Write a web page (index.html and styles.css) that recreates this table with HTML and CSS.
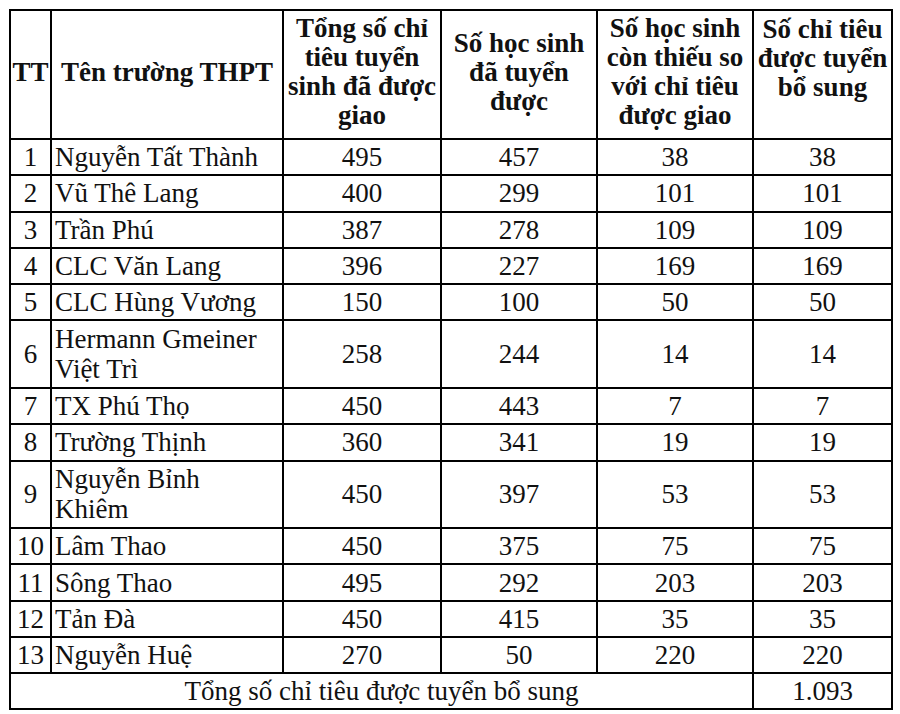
FILE: index.html
```html
<!DOCTYPE html>
<html lang="vi">
<head>
<meta charset="utf-8">
<link rel="stylesheet" href="styles.css">
</head>
<body>
<table class="tbl">
  <colgroup>
    <col class="c-tt"><col class="c-name"><col class="c-n1"><col class="c-n2"><col class="c-n3"><col class="c-n4">
  </colgroup>
  <thead>
    <tr class="head">
      <th>TT</th>
      <th>Tên trường THPT</th>
      <th>Tổng số chỉ<br>tiêu tuyển<br>sinh đã được<br>giao</th>
      <th>Số học sinh<br>đã tuyển<br>được</th>
      <th>Số học sinh<br>còn thiếu so<br>với chỉ tiêu<br>được giao</th>
      <th class="top">Số chỉ tiêu<br>được tuyển<br>bổ sung</th>
    </tr>
  </thead>
  <tbody>
    <tr><td class="tt">1</td><td class="name">Nguyễn Tất Thành</td><td>495</td><td>457</td><td>38</td><td>38</td></tr>
    <tr><td class="tt">2</td><td class="name">Vũ Thê Lang</td><td>400</td><td>299</td><td>101</td><td>101</td></tr>
    <tr><td class="tt">3</td><td class="name">Trần Phú</td><td>387</td><td>278</td><td>109</td><td>109</td></tr>
    <tr><td class="tt">4</td><td class="name">CLC Văn Lang</td><td>396</td><td>227</td><td>169</td><td>169</td></tr>
    <tr><td class="tt">5</td><td class="name">CLC Hùng Vương</td><td>150</td><td>100</td><td>50</td><td>50</td></tr>
    <tr class="dbl"><td class="tt">6</td><td class="name">Hermann Gmeiner<br>Việt Trì</td><td>258</td><td>244</td><td>14</td><td>14</td></tr>
    <tr><td class="tt">7</td><td class="name">TX Phú Thọ</td><td>450</td><td>443</td><td>7</td><td>7</td></tr>
    <tr><td class="tt">8</td><td class="name">Trường Thịnh</td><td>360</td><td>341</td><td>19</td><td>19</td></tr>
    <tr class="dbl"><td class="tt">9</td><td class="name">Nguyễn Bỉnh<br>Khiêm</td><td>450</td><td>397</td><td>53</td><td>53</td></tr>
    <tr><td class="tt">10</td><td class="name">Lâm Thao</td><td>450</td><td>375</td><td>75</td><td>75</td></tr>
    <tr><td class="tt">11</td><td class="name">Sông Thao</td><td>495</td><td>292</td><td>203</td><td>203</td></tr>
    <tr><td class="tt">12</td><td class="name">Tản Đà</td><td>450</td><td>415</td><td>35</td><td>35</td></tr>
    <tr><td class="tt">13</td><td class="name">Nguyễn Huệ</td><td>270</td><td>50</td><td>220</td><td>220</td></tr>
    <tr class="total"><td colspan="5">Tổng số chỉ tiêu được tuyển bổ sung</td><td>1.093</td></tr>
  </tbody>
</table>
</body>
</html>
```
FILE: styles.css
```css
html, body {
  margin: 0;
  padding: 0;
  background: #fff;
}
body {
  padding: 9px 0 0 9px;
  font-family: "Liberation Serif", "Times New Roman", serif;
  color: #111;
}
.tbl {
  border-collapse: collapse;
  table-layout: fixed;
  width: 882px;
  font-family: "Liberation Serif", "Times New Roman", serif;
}
.c-tt { width: 41px; }
.c-name { width: 232px; }
.c-n1 { width: 158px; }
.c-n2 { width: 156px; }
.c-n3 { width: 156px; }
.c-n4 { width: 139px; }
.tbl th, .tbl td {
  border: 2px solid #000;
  padding: 0;
  text-align: center;
  vertical-align: middle;
  white-space: nowrap;
}
.tbl th {
  font-weight: bold;
  font-size: 27px;
  line-height: 29px;
  padding-bottom: 5px;
}
.tbl th.top { vertical-align: top; padding-top: 4px; padding-bottom: 0; }
.head { height: 129px; }
.tbl td {
  font-size: 27px;
  line-height: 30px;
}
.tbl tbody tr { height: 36.3px; }
.tbl tbody tr.dbl { height: 67.5px; }
.tbl td.name {
  text-align: left;
  padding-left: 3px;
}
.tbl tr.total { height: 36px; }
```
